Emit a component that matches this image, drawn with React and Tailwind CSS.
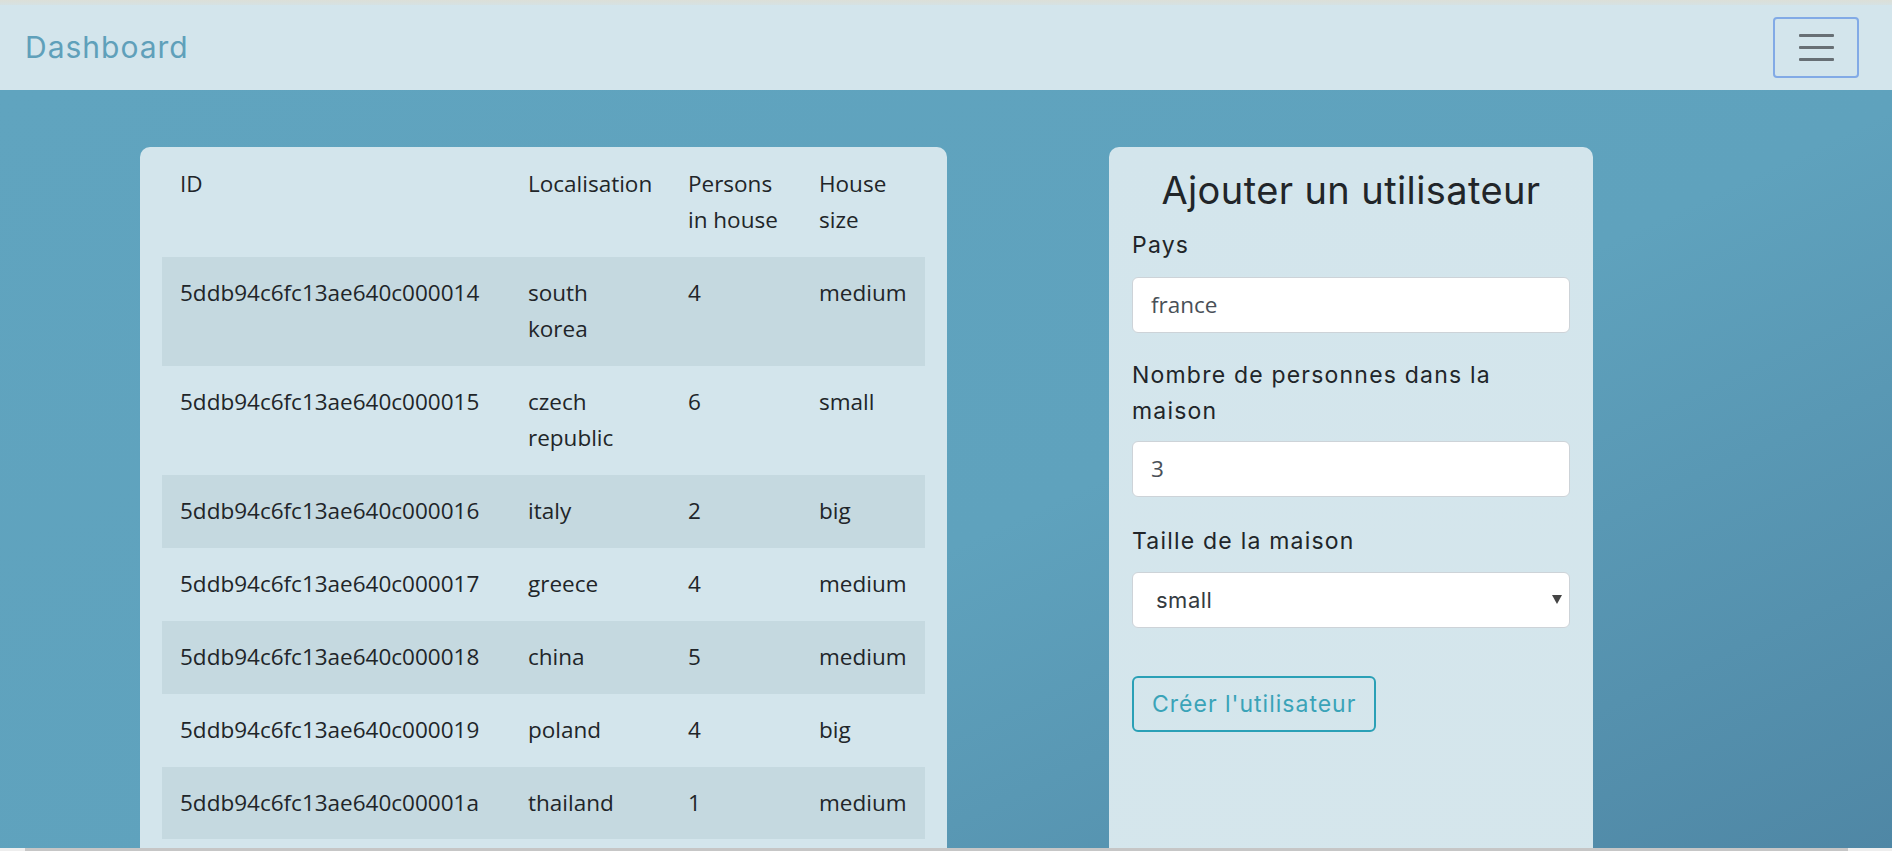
import React from "react";

const rows = [
  { id: "5ddb94c6fc13ae640c000014", loc: ["south", "korea"], p: "4", s: "medium" },
  { id: "5ddb94c6fc13ae640c000015", loc: ["czech", "republic"], p: "6", s: "small" },
  { id: "5ddb94c6fc13ae640c000016", loc: ["italy"], p: "2", s: "big" },
  { id: "5ddb94c6fc13ae640c000017", loc: ["greece"], p: "4", s: "medium" },
  { id: "5ddb94c6fc13ae640c000018", loc: ["china"], p: "5", s: "medium" },
  { id: "5ddb94c6fc13ae640c000019", loc: ["poland"], p: "4", s: "big" },
  { id: "5ddb94c6fc13ae640c00001a", loc: ["thailand"], p: "1", s: "medium" },
];

const mont = "font-['Inter','DejaVu_Sans',sans-serif]";
const body = "font-['Open_Sans','Noto_Sans',sans-serif]";

function Cell({ children }) {
  return (
    <td className="align-top px-[18px] py-[18px] border-t border-transparent">{children}</td>
  );
}

export default function App() {
  return (
    <div className="w-[1892px] h-[851px] overflow-hidden flex flex-col bg-[#60a4bf]">
      <div className="h-[5px] bg-[linear-gradient(#dcdfd8,#d6e2e3)]" />
      <nav className="h-[85px] bg-[#d3e5ec] flex items-center justify-between pl-[25px] pr-[33px]">
        <span className={`${mont} text-[30px] text-[#5fa0ba] tracking-[1px]`}>Dashboard</span>
        <button className="w-[86px] h-[61px] border-2 border-[#82aae6] rounded-[4px] flex flex-col items-center justify-center gap-[9px]">
          <span className="block w-[35px] h-[3px] bg-[#676f75] rounded-[1px]" />
          <span className="block w-[35px] h-[3px] bg-[#676f75] rounded-[1px]" />
          <span className="block w-[35px] h-[3px] bg-[#676f75] rounded-[1px]" />
        </button>
      </nav>
      <main className="flex-1 overflow-hidden bg-[linear-gradient(155deg,#60a4bf_0%,#5fa2bd_55%,#4f87a5_100%)] flex items-start pl-[140px] pt-[57px] gap-[162px]">
        <div className="w-[807px] h-[800px] shrink-0 bg-[#d3e5ec] rounded-[10px] px-[22px] pt-[1px]">
          <table className={`${body} w-[763px] table-fixed border-collapse text-[22.5px] leading-[36px] text-[#212529]`}>
            <thead>
              <tr>
                <th className="w-[348px] text-left font-normal align-top px-[18px] py-[18px]">ID</th>
                <th className="w-[160px] text-left font-normal align-top px-[18px] py-[18px]">Localisation</th>
                <th className="w-[131px] text-left font-normal align-top px-[18px] py-[18px]">Persons<br />in house</th>
                <th className="w-[124px] text-left font-normal align-top px-[18px] py-[18px]">House<br />size</th>
              </tr>
            </thead>
            <tbody>
              {rows.map((r, i) => (
                <tr key={r.id} className={i % 2 === 0 ? "bg-[#c5d9e0]" : ""}>
                  <Cell>{r.id}</Cell>
                  <Cell>
                    {r.loc.map((l, j) => (
                      <React.Fragment key={j}>
                        {j > 0 && <br />}
                        {l}
                      </React.Fragment>
                    ))}
                  </Cell>
                  <Cell>{r.p}</Cell>
                  <Cell>{r.s}</Cell>
                </tr>
              ))}
            </tbody>
          </table>
        </div>
        <div className={`${mont} w-[484px] h-[800px] shrink-0 bg-[linear-gradient(180deg,#d3e5ec,#d5e6ec)] rounded-[10px] px-[23px] pt-[20px] text-[#212529]`}>
          <h3 className="text-center text-[38px] leading-[46px] tracking-[0.4px] mb-[14px]">Ajouter un utilisateur</h3>
          <label className="block text-[23px] leading-[36px] tracking-[1.2px] mb-[14px]">Pays</label>
          <div className={`${body} h-[56px] bg-white border-[1.5px] border-[#cdd3d8] rounded-[6px] px-[18px] flex items-center text-[22.5px] text-[#495057]`}>france</div>
          <label className="block text-[23px] leading-[36px] tracking-[1.2px] mt-[24px] mb-[12px]">Nombre de personnes dans la<br />maison</label>
          <div className={`${body} h-[56px] bg-white border-[1.5px] border-[#cdd3d8] rounded-[6px] px-[18px] flex items-center text-[22.5px] text-[#495057]`}>3</div>
          <label className="block text-[23px] leading-[36px] tracking-[1.2px] mt-[26px] mb-[13px]">Taille de la maison</label>
          <div className="relative h-[56px] bg-white border-[1.5px] border-[#cdd3d8] rounded-[6px] pl-[23px] flex items-center text-[22px] tracking-[0.5px] text-[#343a40]">
            small
            <svg className="absolute right-[7px] top-[22px]" width="10" height="9" viewBox="0 0 10 9">
              <path d="M0 0 L10 0 L5 9 Z" fill="#444" />
            </svg>
          </div>
          <button className="mt-[48px] h-[56px] px-[18px] border-2 border-[#2aa0b6] rounded-[6px] text-[23px] tracking-[1px] text-[#3aa3b8]">Créer l'utilisateur</button>
        </div>
      </main>
      <div className="h-[3px] bg-[#eeeeee] pl-[25px] pr-[44px]">
        <div className="h-full bg-[#c6c6c6]" />
      </div>
    </div>
  );
}
